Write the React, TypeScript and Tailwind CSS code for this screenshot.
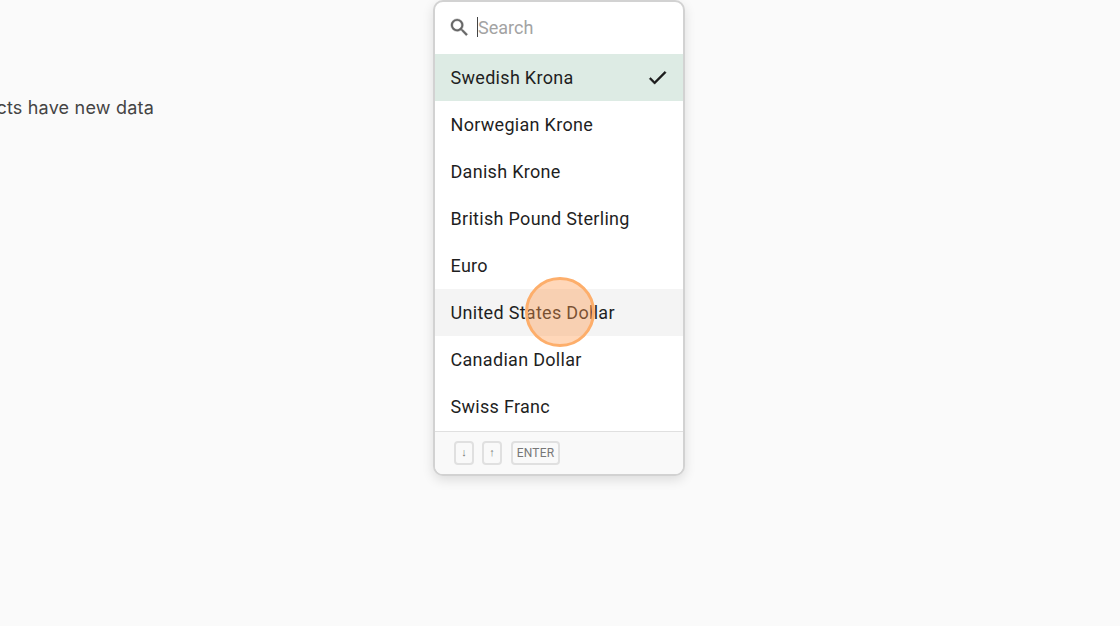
const currencies = [
  'Swedish Krona',
  'Norwegian Krone',
  'Danish Krone',
  'British Pound Sterling',
  'Euro',
  'United States Dollar',
  'Canadian Dollar',
  'Swiss Franc',
];

function Key({ label, wide }: { label: string; wide?: boolean }) {
  return (
    <span
      className={`flex h-[24px] items-center justify-center rounded-[4px] border-2 border-[#e0e0e0] text-[#777777] ${
        wide ? 'ml-px w-[49px] text-[12px] tracking-[0.2px]' : 'w-[20px] text-[11px]'
      }`}
    >
      {label}
    </span>
  );
}

export default function App() {
  return (
    <div className="flex h-[626px] w-[1120px] overflow-hidden bg-[#fafafa] font-['Roboto',sans-serif] antialiased">
      <div className="mt-[96px] flex h-[24px] w-[154px] shrink-0 justify-end overflow-hidden">
        <span className="whitespace-nowrap font-['Inter',sans-serif] text-[18px] leading-[24px] tracking-[0.2px] text-[#444444]">
          Your products have new data
        </span>
      </div>

      <div className="relative ml-[279px] h-[476px] w-[252px] overflow-hidden rounded-[10px] border-2 border-[#d2d2d2] bg-white shadow-[0_4px_12px_rgba(0,0,0,0.12)]">
        <div className="flex h-[52px] items-center pb-[2px] pl-[13px]">
          <svg viewBox="0 0 24 24" className="h-[23px] w-[23px] fill-[#666666] stroke-[#666666] stroke-[0.4]">
            <path d="M15.5 14h-.79l-.28-.27A6.471 6.471 0 0 0 16 9.5 6.5 6.5 0 1 0 9.5 16c1.61 0 3.09-.59 4.23-1.57l.27.28v.79l5 4.99L20.49 19l-4.99-5zm-6 0C7.01 14 5 11.99 5 9.5S7.01 5 9.5 5 14 7.01 14 9.5 11.99 14 9.5 14z" />
          </svg>
          <span className="ml-[6px] h-[20px] w-px bg-[#444444]" />
          <span className="text-[18px] text-[#a3a3a3]">Search</span>
        </div>

        <ul>
          {currencies.map((name, i) => (
            <li
              key={name}
              className={`flex h-[47px] items-center justify-between pl-[15.5px] pr-[14px] text-[18px] tracking-[0.3px] text-[#1f1f1f] ${
                i === 0 ? 'bg-[#ddebe4]' : i === 5 ? 'bg-[#f4f4f4]' : ''
              }`}
            >
              {name}
              {i === 0 && (
                <svg viewBox="0 0 24 24" className="h-[23px] w-[23px] fill-[#1c1c1c] stroke-[#1c1c1c] stroke-[0.5]">
                  <path d="M9 16.17L4.83 12l-1.42 1.41L9 19 21 7l-1.41-1.41z" />
                </svg>
              )}
            </li>
          ))}
        </ul>

        <div className="mt-px flex h-[43px] items-center gap-[8px] border-t border-[#e0e0e0] bg-[#f9f9f9] pl-[19px]">
          <Key label="↓" />
          <Key label="↑" />
          <Key label="ENTER" wide />
        </div>

        <div className="absolute left-[90px] top-[275px] h-[70px] w-[70px] rounded-full border-[3px] border-[#fdae6b] bg-[#ff9c50]/40" />
      </div>
    </div>
  );
}
